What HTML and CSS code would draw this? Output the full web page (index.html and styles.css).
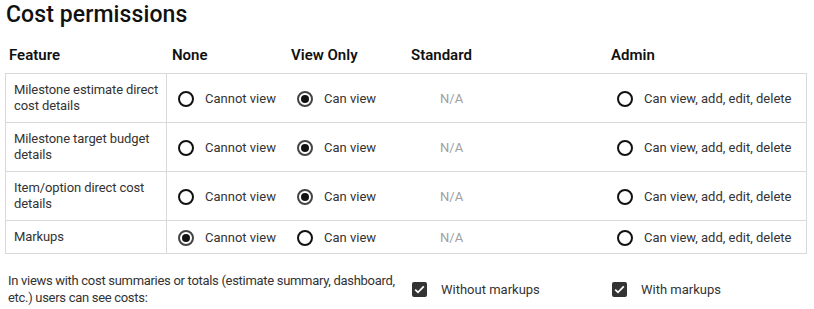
FILE: index.html
```html
<!DOCTYPE html>
<html>
<head>
<meta charset="utf-8">
<link rel="stylesheet" href="styles.css">
</head>
<body>
<div class="page">
  <h1 class="title">Cost permissions</h1>
  <div class="grid head">
    <div class="hcell">Feature</div>
    <div class="hcell">None</div>
    <div class="hcell">View Only</div>
    <div class="hcell">Standard</div>
    <div class="hcell">Admin</div>
  </div>
  <div class="table">
    <div class="grid row">
      <div class="feat">Milestone estimate direct cost details</div>
      <div class="opt"><span class="radio"></span>Cannot view</div>
      <div class="opt"><span class="radio on"></span>Can view</div>
      <div class="na">N/A</div>
      <div class="opt"><span class="radio"></span>Can view, add, edit, delete</div>
    </div>
    <div class="grid row">
      <div class="feat">Milestone target budget details</div>
      <div class="opt"><span class="radio"></span>Cannot view</div>
      <div class="opt"><span class="radio on"></span>Can view</div>
      <div class="na">N/A</div>
      <div class="opt"><span class="radio"></span>Can view, add, edit, delete</div>
    </div>
    <div class="grid row">
      <div class="feat">Item/option direct cost details</div>
      <div class="opt"><span class="radio"></span>Cannot view</div>
      <div class="opt"><span class="radio on"></span>Can view</div>
      <div class="na">N/A</div>
      <div class="opt"><span class="radio"></span>Can view, add, edit, delete</div>
    </div>
    <div class="grid row last">
      <div class="feat">Markups</div>
      <div class="opt"><span class="radio on"></span>Cannot view</div>
      <div class="opt"><span class="radio"></span>Can view</div>
      <div class="na">N/A</div>
      <div class="opt"><span class="radio"></span>Can view, add, edit, delete</div>
    </div>
  </div>
  <div class="footer">
    <div class="ftext">In views with cost summaries or totals (estimate summary, dashboard, etc.) users can see costs:</div>
    <div class="check"><span class="box"><svg width="11" height="9" viewBox="0 0 11 9"><path d="M1.2 4.6 L4 7.3 L9.8 1.4" fill="none" stroke="#fff" stroke-width="1.8"/></svg></span>Without markups</div>
    <div class="check"><span class="box"><svg width="11" height="9" viewBox="0 0 11 9"><path d="M1.2 4.6 L4 7.3 L9.8 1.4" fill="none" stroke="#fff" stroke-width="1.8"/></svg></span>With markups</div>
  </div>
</div>
</body>
</html>
```

FILE: styles.css
```css
* { box-sizing: border-box; }
html, body { margin: 0; padding: 0; background: #fff; }
body {
  font-family: Roboto, "Liberation Sans", sans-serif;
  color: #222;
  font-size: 13px;
}
.page {
  padding: 0 7px 0 5px;
  width: 814px;
}
.title {
  margin: 0;
  padding-left: 1px;
  font-size: 23px;
  font-weight: 500;
  line-height: 30px;
  color: #111;
  letter-spacing: 0.1px;
}
.grid {
  display: grid;
  grid-template-columns: 162px 119px 120px 200px 200px;
}
.head {
  height: 43px;
  align-items: center;
  padding-top: 6px;
}
.hcell {
  font-size: 15px;
  font-weight: 600;
  color: #111;
  padding-left: 5px;
}
.hcell:first-child { padding-left: 4px; }
.table {
  border: 1px solid #d9d9d9;
  width: 802px;
}
.row {
  grid-template-columns: 161px 119px 120px 200px 200px;
  border-bottom: 1px solid #d9d9d9;
  align-items: stretch;
}
.row.last { border-bottom: none; }
.feat {
  border-right: 1px solid #d9d9d9;
  padding: 8px 0 8px 8px;
  line-height: 16px;
  color: #333;
  letter-spacing: -0.1px;
}
.opt {
  display: flex;
  align-items: center;
  padding-left: 11px;
  color: #333;
}
.na {
  display: flex;
  align-items: center;
  padding-left: 34px;
  color: #a0a0a0;
}
.radio {
  width: 16px;
  height: 16px;
  border: 2px solid #111;
  border-radius: 50%;
  margin-right: 11px;
  flex: none;
  position: relative;
  margin-top: 2px;
}
.radio.on {
  border-color: #444;
}
.radio.on::after {
  content: "";
  position: absolute;
  left: 2px;
  top: 2px;
  width: 8px;
  height: 8px;
  border-radius: 50%;
  background: #111;
}
.footer {
  display: grid;
  grid-template-columns: 402px 200px 200px;
  align-items: center;
  margin-top: 18px;
}
.ftext {
  padding-left: 3px;
  line-height: 17px;
  color: #333;
  letter-spacing: -0.3px;
}
.check {
  display: flex;
  align-items: center;
  padding-left: 5px;
  color: #333;
}
.box {
  width: 15px;
  height: 15px;
  background: #333;
  border-radius: 2px;
  margin-right: 14px;
  display: flex;
  align-items: center;
  justify-content: center;
}
```
